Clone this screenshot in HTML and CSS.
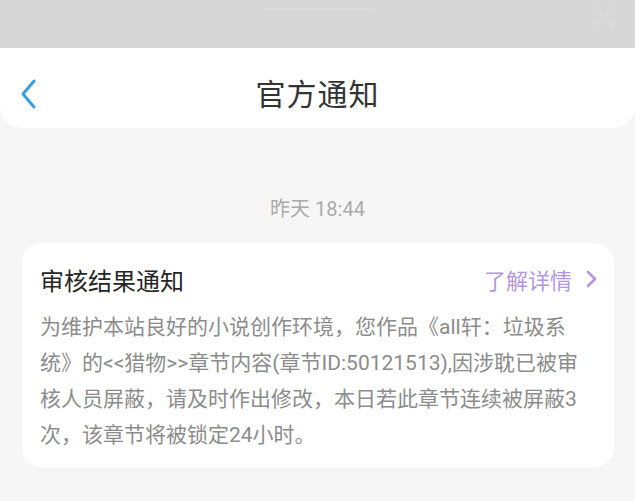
FILE: index.html
```html
<!DOCTYPE html>
<html lang="zh-CN">

<head>
    <meta charset="UTF-8">
    <meta name="viewport" content="width=device-width, initial-scale=1.0">
    <link rel="stylesheet" href="styles.css">
    <title>官方通知</title>
</head>

<body>

    <div class="top-strip">
        <span class="grip"></span>
        <svg class="close" width="28" height="26" viewBox="0 0 28 26">
            <path d="M3 2 L25 24 M25 2 L3 24" stroke="#dadada" stroke-width="3" fill="none" stroke-linecap="round"/>
        </svg>
    </div>

    <div class="header">
        <svg class="back" width="18" height="30" viewBox="0 0 18 30">
            <path d="M15 2 L4 15 L15 28" stroke="#3a9fe2" stroke-width="3" fill="none" stroke-linecap="round" stroke-linejoin="round"/>
        </svg>
        <h1 class="title">官方通知</h1>
        <span></span>
    </div>

    <div class="time">昨天 18:44</div>

    <div class="notice-card">
        <div class="notice-head">
            <span class="notice-title">审核结果通知</span>
            <a class="notice-more">了解详情
                <svg width="12" height="18" viewBox="0 0 12 18">
                    <path d="M2 2 L9 9 L2 16" stroke="#b396e0" stroke-width="2.6" fill="none" stroke-linecap="round" stroke-linejoin="round"/>
                </svg>
            </a>
        </div>
        <p class="notice-body">为维护本站良好的小说创作环境，您作品《all轩：垃圾系统》的&lt;&lt;猎物&gt;&gt;章节内容(章节ID:50121513),因涉耽已被审核人员屏蔽，请及时作出修改，本日若此章节连续被屏蔽3次，该章节将被锁定24小时。</p>
    </div>

</body>

</html>
```

FILE: styles.css
```css
body {
    font-family: Roboto, "Noto Sans CJK SC", sans-serif;
    background-color: #f7f6f7;
    margin: 0;
    color: #333;
}

.top-strip {
    height: 48px;
    background-color: #d7d7d7;
    display: flex;
    justify-content: center;
    align-items: flex-start;
    position: relative;
}

.grip {
    width: 110px;
    height: 3px;
    margin-top: 8px;
    border-radius: 2px;
    background-color: #d9d9d9;
}

.close {
    position: absolute;
    top: 4px;
    right: 17px;
}

.header {
    height: 80px;
    box-sizing: border-box;
    padding-top: 8px;
    background-color: #fff;
    border-radius: 0 0 22px 22px;
    display: grid;
    grid-template-columns: 1fr auto 1fr;
    align-items: center;
}

.back {
    margin-left: 19px;
    margin-top: 4px;
}

.title {
    margin: 0;
    font-size: 30px;
    font-weight: 400;
    color: #333;
    letter-spacing: 1px;
}

.time {
    margin-top: 69px;
    text-align: center;
    font-size: 20px;
    line-height: 24px;
    color: #aaa;
}

.notice-card {
    margin: 22px 21px 0 22px;
    background-color: #fff;
    border-radius: 20px;
    padding: 18px 16px 14px 18px;
}

.notice-head {
    height: 36px;
    display: flex;
    justify-content: space-between;
    align-items: center;
}

.notice-title {
    font-size: 24px;
    color: #262626;
}

.notice-more {
    font-size: 22px;
    color: #b396e0;
    display: flex;
    align-items: center;
    gap: 14px;
}

.notice-body {
    margin: 12px 10px 0 0;
    font-size: 21px;
    line-height: 36px;
    color: #8c8c8c;
}
```
